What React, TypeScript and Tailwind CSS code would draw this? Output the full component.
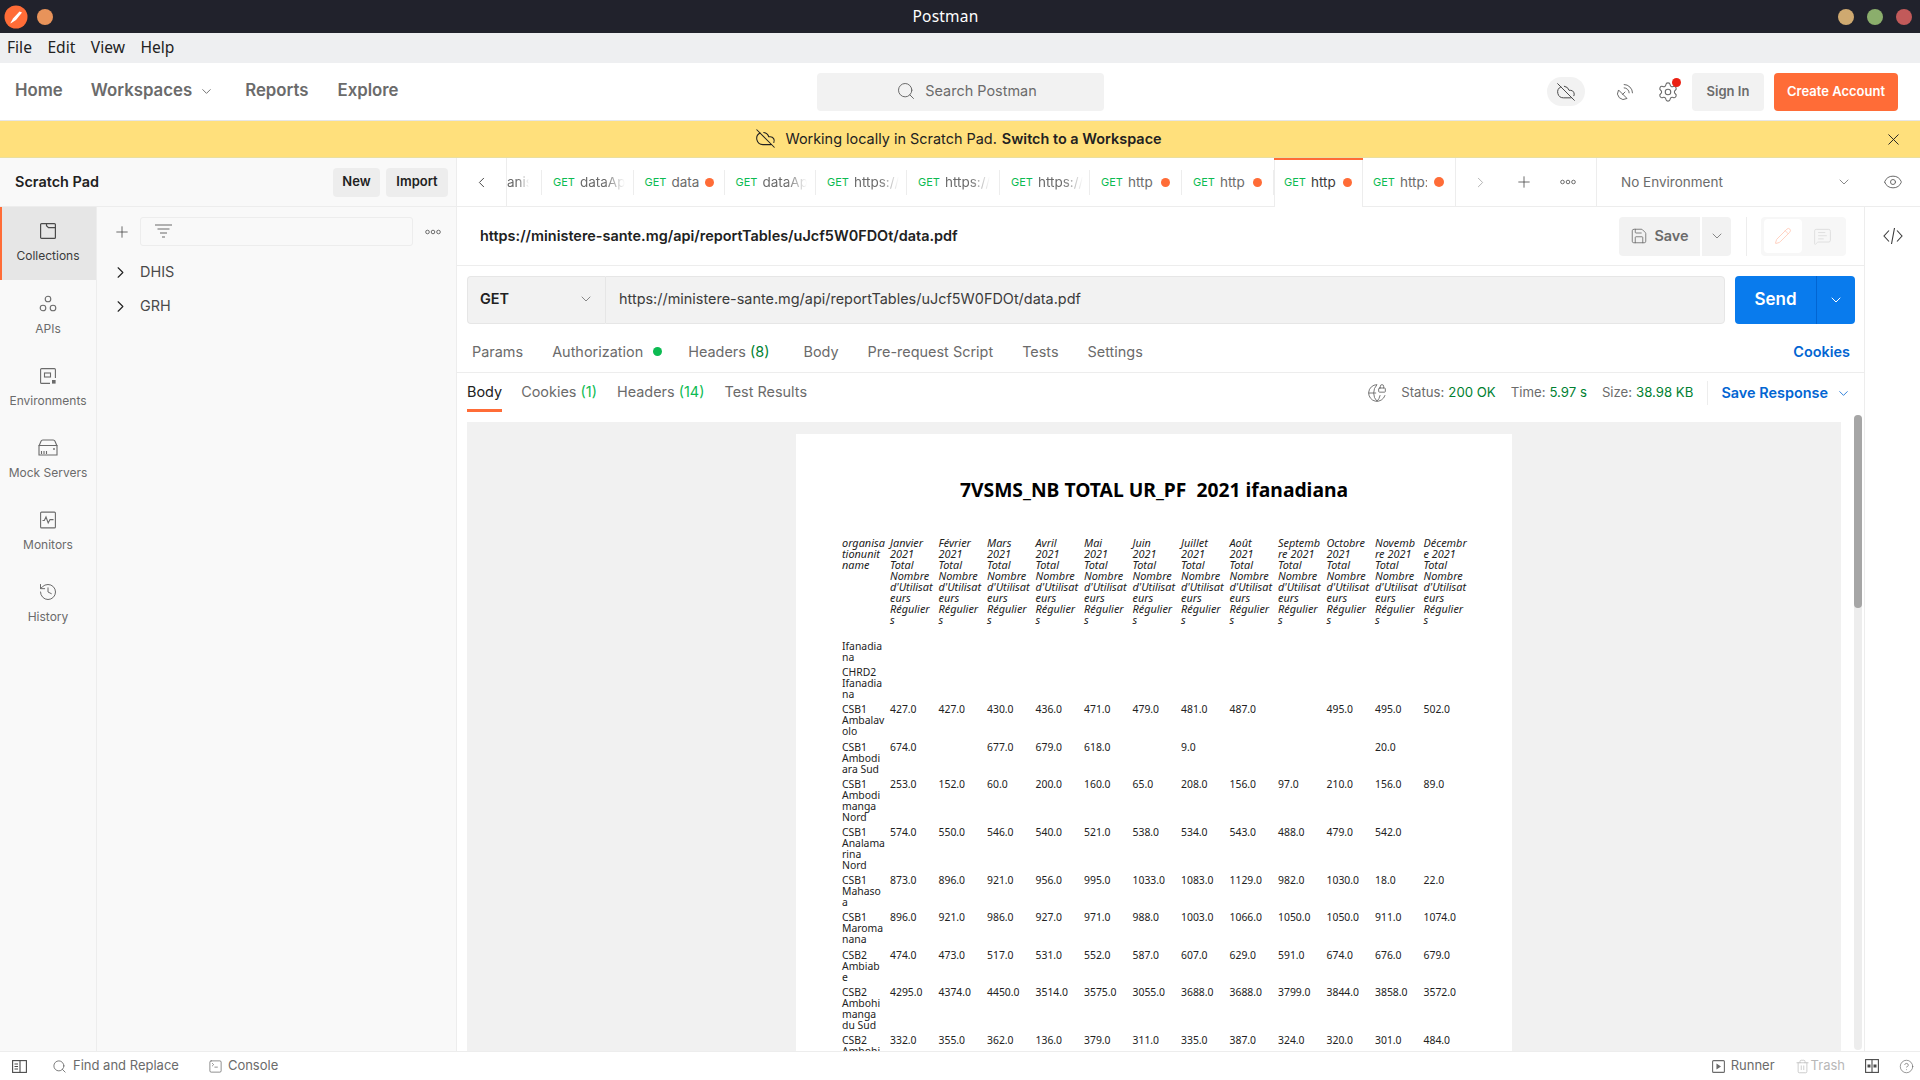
import {
  ChevronDown,
  ChevronLeft,
  ChevronRight,
  CircleHelp,
  CloudOff,
  Eye,
  GlobeLock,
  History,
  MessageSquareText,
  Pencil,
  Plus,
  SatelliteDish,
  Save,
  Search,
  Settings,
  SquareTerminal,
  Trash2,
  X,
} from "lucide-react";

const tabs = [
  { name: "dataAp", w: "w-[91.5px]" },
  { name: "data", dirty: true, w: "w-[91px]" },
  { name: "dataAp", w: "w-[91.5px]" },
  { name: "https://", w: "w-[91px]" },
  { name: "https://", w: "w-[93px]" },
  { name: "https://", w: "w-[90px]" },
  { name: "http", dirty: true, w: "w-[92px]" },
  { name: "http", dirty: true, w: "w-[92px]" },
];

const monthHeads = [
  "Janvier\n2021",
  "Février\n2021",
  "Mars\n2021",
  "Avril\n2021",
  "Mai\n2021",
  "Juin\n2021",
  "Juillet\n2021",
  "Août\n2021",
  "Septemb\nre 2021",
  "Octobre\n2021",
  "Novemb\nre 2021",
  "Décembr\ne 2021",
];

const rows: [string, string[]][] = [
  ["Ifanadia\nna", []],
  ["CHRD2\nIfanadia\nna", []],
  ["CSB1\nAmbalav\nolo", ["427.0", "427.0", "430.0", "436.0", "471.0", "479.0", "481.0", "487.0", "", "495.0", "495.0", "502.0"]],
  ["CSB1\nAmbodi\nara Sud", ["674.0", "", "677.0", "679.0", "618.0", "", "9.0", "", "", "", "20.0", ""]],
  ["CSB1\nAmbodi\nmanga\nNord", ["253.0", "152.0", "60.0", "200.0", "160.0", "65.0", "208.0", "156.0", "97.0", "210.0", "156.0", "89.0"]],
  ["CSB1\nAnalama\nrina\nNord", ["574.0", "550.0", "546.0", "540.0", "521.0", "538.0", "534.0", "543.0", "488.0", "479.0", "542.0", ""]],
  ["CSB1\nMahaso\na", ["873.0", "896.0", "921.0", "956.0", "995.0", "1033.0", "1083.0", "1129.0", "982.0", "1030.0", "18.0", "22.0"]],
  ["CSB1\nMaroma\nnana", ["896.0", "921.0", "986.0", "927.0", "971.0", "988.0", "1003.0", "1066.0", "1050.0", "1050.0", "911.0", "1074.0"]],
  ["CSB2\nAmbiab\ne", ["474.0", "473.0", "517.0", "531.0", "552.0", "587.0", "607.0", "629.0", "591.0", "674.0", "676.0", "679.0"]],
  ["CSB2\nAmbohi\nmanga\ndu Sud", ["4295.0", "4374.0", "4450.0", "3514.0", "3575.0", "3055.0", "3688.0", "3688.0", "3799.0", "3844.0", "3858.0", "3572.0"]],
  ["CSB2\nAmbohi\nmanga", ["332.0", "355.0", "362.0", "136.0", "379.0", "311.0", "335.0", "387.0", "324.0", "320.0", "301.0", "484.0"]],
];

function Rings() {
  return (
    <svg width="16" height="6" viewBox="0 0 16 6" fill="none" stroke="#6b6b6b" strokeWidth="1">
      <circle cx="2.5" cy="3" r="1.8" />
      <circle cx="8" cy="3" r="1.8" />
      <circle cx="13.5" cy="3" r="1.8" />
    </svg>
  );
}

function RailIcon({ kind }: { kind: string }) {
  if (kind === "Collections") {
    return (
      <svg width="18" height="18" viewBox="0 0 18 18" fill="none" stroke="#4a4a4a" strokeWidth="1.2">
        <rect x="1.6" y="1.6" width="14.8" height="14.8" rx="1" />
        <path d="M7.5 1.6v2.2l2 1.8h6.9" />
      </svg>
    );
  }
  if (kind === "APIs") {
    return (
      <svg width="18" height="18" viewBox="0 0 18 18" fill="none" stroke="#6b6b6b" strokeWidth="1.1">
        <circle cx="9" cy="4" r="2.8" />
        <circle cx="4" cy="13" r="2.8" />
        <circle cx="14" cy="13" r="2.8" />
      </svg>
    );
  }
  if (kind === "Environments") {
    return (
      <svg width="18" height="18" viewBox="0 0 18 18" fill="none" stroke="#6b6b6b" strokeWidth="1.1">
        <path d="M11 16.4H2.6a1 1 0 0 1-1-1V2.6a1 1 0 0 1 1-1h12.8a1 1 0 0 1 1 1V11" />
        <rect x="5.5" y="6" width="6" height="4" />
        <rect x="13" y="13" width="3.6" height="3.6" fill="#6b6b6b" stroke="none" />
      </svg>
    );
  }
  if (kind === "Mock Servers") {
    return (
      <svg width="20" height="17" viewBox="0 0 20 17" fill="none" stroke="#6b6b6b" strokeWidth="1.1">
        <path d="M1 7 3 2.2C3.3 1.5 4 1 4.8 1h10.4c.8 0 1.5.5 1.8 1.2L19 7" />
        <path d="M1 6.5h18V16H1z" />
        <path d="M3.5 15v-3M6 15v-3M8.5 15v-3" />
        <circle cx="16" cy="10" r="0.9" fill="#6b6b6b" stroke="none" />
      </svg>
    );
  }
  if (kind === "Monitors") {
    return (
      <svg width="18" height="18" viewBox="0 0 18 18" fill="none" stroke="#6b6b6b" strokeWidth="1.1">
        <rect x="1.6" y="1.1" width="14.8" height="15.8" rx="1" />
        <path d="M3.5 9.5h1.8l1.7-3.5 2.2 6 1.8-3.4h3.5" />
      </svg>
    );
  }
  return <History size={20} strokeWidth={1.2} color="#6b6b6b" />;
}

function RailItem({ label, active }: { label: string; active?: boolean }) {
  return (
    <div
      className={
        active
          ? "flex h-[73px] flex-col items-center border-l-2 border-[#ff6c37] bg-[#e6e6e6] pr-[2px] pt-[15px] text-[#3b3b3b]"
          : "flex h-[72.1px] flex-col items-center pt-[14.5px] text-[#6b6b6b]"
      }
    >
      <div className="flex h-[18px] items-center">
        <RailIcon kind={label} />
      </div>
      <span className="mt-[8px] text-[12px] leading-[15px]">{label}</span>
    </div>
  );
}

function Tab({ name, dirty, w }: { name: string; dirty?: boolean; w: string }) {
  return (
    <div className={`flex h-full shrink-0 items-center ${w}`}>
      <div className="flex h-[25px] w-full items-center overflow-hidden border-r border-[#ededed] pl-[11px]">
        <span className="text-[11px] text-[#0cbb52]">GET</span>
        {dirty ? (
          <>
            <span className="ml-[5px] whitespace-nowrap text-[13.5px] text-[#6b6b6b]">{name}</span>
            <span className={name === "data" ? "ml-[6px] size-[9px] shrink-0 rounded-full bg-[#ff6c37]" : "ml-[8px] size-[9px] shrink-0 rounded-full bg-[#ff6c37]"} />
          </>
        ) : (
          <span className="ml-[5px] w-[45px] overflow-hidden whitespace-nowrap text-[13.5px] text-[#6b6b6b] [mask-image:linear-gradient(to_right,black_55%,transparent)]">
            {name}
          </span>
        )}
      </div>
    </div>
  );
}

function Lines({ text }: { text: string }) {
  return <div className="whitespace-pre">{text}</div>;
}

function PdfPage() {
  return (
    <div className="mx-auto mt-[12px] h-[700px] w-[716px] bg-white pl-[46px] font-['Noto_Sans',sans-serif] text-[10.4px] leading-[11px] text-[#222222]">
      <h1 className="w-[670px] whitespace-pre pr-[46px] pt-[43px] text-center text-[19.3px] font-bold leading-[26px] text-black">
        {"7VSMS_NB TOTAL UR_PF  2021 ifanadiana"}
      </h1>
      <div className="mt-[34px] grid grid-cols-[48px_repeat(12,48.5px)] text-[10.9px] italic">
        <Lines text={"organisa\ntionunit\nname"} />
        {monthHeads.map((head) => (
          <Lines key={head} text={`${head}\nTotal\nNombre\nd'Utilisat\neurs\nRégulier\ns`} />
        ))}
      </div>
      <div className="mt-[16px] flex flex-col gap-[4.2px]">
        {rows.map(([name, values]) => (
          <div key={name} className="grid grid-cols-[48px_repeat(12,48.5px)]">
            <Lines text={name} />
            {values.map((value, i) => (
              <div key={i}>{value}</div>
            ))}
          </div>
        ))}
      </div>
    </div>
  );
}

export default function App() {
  return (
    <div className="flex h-[1080px] w-[1920px] flex-col overflow-hidden bg-white font-['Inter',sans-serif] text-[14.45px] text-[#3b3b3b]">
      {/* window chrome */}
      <div className="flex h-[33px] shrink-0 items-center bg-[#21222c] pl-[4px] pr-[8px]">
        <svg width="24" height="24" viewBox="0 0 24 24">
          <circle cx="12" cy="12" r="11.5" fill="#ff6c37" />
          <path d="M6.5 18 9 13.5l6.5-7 2.5 1-6 7.5-5.5 3.500z" fill="#ffffff" />
        </svg>
        <span className="ml-[9px] size-[16px] rounded-full bg-[#e8935a]" />
        <div className="flex-1 text-center font-['Noto_Sans',sans-serif] text-[15.5px] tracking-[0.2px] text-white">
          Postman
        </div>
        <div className="flex gap-[13px]">
          <span className="size-[16px] rounded-full bg-[#cfa970]" />
          <span className="size-[16px] rounded-full bg-[#8bae6c]" />
          <span className="size-[16px] rounded-full bg-[#c25a5a]" />
        </div>
      </div>

      <div className="flex h-[30px] shrink-0 items-center gap-[15.5px] bg-[#eeeff1] pl-[7px] font-['Noto_Sans',sans-serif] text-[15.6px] text-[#222222]">
        <span>File</span>
        <span>Edit</span>
        <span>View</span>
        <span>Help</span>
      </div>

      {/* top nav */}
      <div className="flex h-[58px] shrink-0 items-center border-b border-[#e6e6e6] pl-[15px] pr-[22px]">
        <div className="mb-[1px] flex w-[802px] items-center text-[16.8px] font-semibold text-[#6b6b6b]">
          <span>Home</span>
          <span className="ml-[28px]">Workspaces</span>
          <ChevronDown size={15} strokeWidth={1.5} className="ml-[7px] mt-[1px]" />
          <span className="ml-[31px]">Reports</span>
          <span className="ml-[29px]">Explore</span>
        </div>
        <div className="flex h-[38px] w-[287px] items-center justify-center gap-[9px] rounded-[4px] bg-[#f2f2f2] pb-[1px] pl-[12px] text-[#6b6b6b]">
          <Search size={20} strokeWidth={1.2} />
          <span>Search Postman</span>
        </div>
        <div className="ml-auto flex items-center">
          <div className="flex h-[29px] w-[38px] items-center justify-center rounded-full bg-[#f2f2f2]">
            <CloudOff size={20} strokeWidth={1.2} color="#4a4a4a" />
          </div>
          <SatelliteDish size={20} strokeWidth={1.2} color="#6b6b6b" className="ml-[30px]" />
          <div className="relative ml-[22px]">
            <Settings size={22} strokeWidth={1.2} color="#6b6b6b" />
            <span className="absolute -right-[2px] -top-[3px] size-[9px] rounded-full bg-[#eb2013]" />
          </div>
          <div className="ml-[13px] flex h-[38px] w-[72px] items-center justify-center rounded-[4px] bg-[#f2f2f2] text-[13px] font-semibold text-[#6b6b6b]">
            Sign In
          </div>
          <div className="ml-[10px] flex h-[38px] w-[124px] items-center justify-center rounded-[4px] bg-[#ff6c37] text-[13px] font-semibold text-white">
            Create Account
          </div>
        </div>
      </div>

      {/* scratch pad banner */}
      <div className="flex h-[37px] shrink-0 items-center border-b border-[#eadf9f] bg-[#ffe07c] text-[#212121]">
        <div className="flex flex-1 items-center justify-center pb-[1px] pl-[33px]">
          <CloudOff size={21} strokeWidth={1.2} />
          <span className="ml-[9px]">Working locally in Scratch Pad.</span>
          <span className="ml-[5px] font-semibold">Switch to a Workspace</span>
        </div>
        <X size={19} strokeWidth={1.2} className="mr-[17px]" />
      </div>

      <div className="flex min-h-0 flex-1">
        {/* sidebar */}
        <div className="flex w-[457px] shrink-0 flex-col border-r border-[#ededed] bg-[#f9f9f9]">
          <div className="flex h-[49px] shrink-0 items-center border-b border-[#ededed] pl-[15px] pr-[8px]">
            <span className="mb-[1px] font-semibold text-[#212121]">Scratch Pad</span>
            <div className="ml-auto flex h-[29px] w-[47px] items-center justify-center rounded-[4px] bg-[#ededed] text-[13px] font-semibold text-[#212121]">
              New
            </div>
            <div className="ml-[6px] flex h-[29px] w-[62px] items-center justify-center rounded-[4px] bg-[#ededed] text-[13px] font-semibold text-[#212121]">
              Import
            </div>
          </div>
          <div className="flex min-h-0 flex-1">
            <div className="w-[97px] shrink-0 border-r border-[#ededed]">
              <RailItem label="Collections" active />
              <RailItem label="APIs" />
              <RailItem label="Environments" />
              <RailItem label="Mock Servers" />
              <RailItem label="Monitors" />
              <RailItem label="History" />
            </div>
            <div className="flex-1">
              <div className="flex items-center pl-[16px] pt-[10px]">
                <Plus size={18} strokeWidth={1} color="#3b3b3b" />
                <div className="ml-[9px] flex h-[29px] w-[273px] items-center rounded-[3px] border border-[#ededed] pl-[14px]">
                  <svg width="17" height="15" viewBox="0 0 17 15" stroke="#6b6b6b" strokeWidth="1.2">
                    <path d="M0 1h17M2.500 5h12M5 9h7M7 13h3" />
                  </svg>
                </div>
                <div className="ml-[12px]">
                  <Rings />
                </div>
              </div>
              <div className="mt-[9px] flex h-[34px] items-center pl-[14px]">
                <ChevronRight size={19} strokeWidth={1.4} color="#212121" />
                <span className="ml-[10px] text-[#4a4a4a]">DHIS</span>
              </div>
              <div className="flex h-[34px] items-center pl-[14px]">
                <ChevronRight size={19} strokeWidth={1.4} color="#212121" />
                <span className="ml-[10px] text-[#4a4a4a]">GRH</span>
              </div>
            </div>
          </div>
        </div>

        {/* workbench */}
        <div className="flex min-w-0 flex-1 flex-col">
          <div className="flex h-[49px] shrink-0 items-center border-b border-[#ededed]">
            <div className="flex h-full w-[50px] shrink-0 items-center justify-center border-r border-[#ededed]">
              <ChevronLeft size={17} strokeWidth={1.3} />
            </div>
            <div className="flex h-full w-[35px] shrink-0 items-center">
              <div className="flex h-[25px] w-full items-center overflow-hidden whitespace-nowrap border-r border-[#ededed] text-[13.5px] text-[#6b6b6b]">
                <span className="[mask-image:linear-gradient(to_right,black_40%,transparent_85%)]">anis</span>
              </div>
            </div>
            {tabs.map((tab, i) => (
              <Tab key={i} {...tab} />
            ))}
            <div className="relative -mb-px flex h-[49px] w-[89px] shrink-0 items-center border-x border-[#ededed] bg-white pl-[9px]">
              <span className="absolute -left-px -right-px top-0 h-[2px] bg-[#ff6c37]" />
              <span className="text-[11px] text-[#0cbb52]">GET</span>
              <span className="ml-[5px] text-[13.5px] text-[#3b3b3b]">http</span>
              <span className="ml-[7px] size-[9px] rounded-full bg-[#ff6c37]" />
            </div>
            <div className="flex h-full w-[93px] shrink-0 items-center border-r border-[#ededed] pl-[10px]">
              <span className="text-[11px] text-[#0cbb52]">GET</span>
              <span className="ml-[5px] w-[27px] overflow-hidden text-[13.5px] text-[#6b6b6b]">http:</span>
              <span className="ml-[7px] size-[10px] rounded-full bg-[#ff6c37]" />
            </div>
            <div className="flex h-full w-[141px] shrink-0 items-center border-r border-[#ededed] pl-[16px] text-[#6b6b6b]">
              <ChevronRight size={17} strokeWidth={1.2} color="#a6a6a6" />
              <Plus size={18} strokeWidth={1} color="#3b3b3b" className="ml-[26px]" />
              <div className="ml-[27px]">
                <Rings />
              </div>
            </div>
            <div className="flex flex-1 items-center pl-[24px] text-[13.5px] text-[#6b6b6b]">
              <span>No Environment</span>
              <ChevronDown size={16} strokeWidth={1.2} className="ml-[113px]" />
              <Eye size={20} strokeWidth={1.2} className="ml-[31px]" />
            </div>
          </div>

          <div className="flex min-h-0 flex-1">
            <div className="flex min-w-0 flex-1 flex-col">
              <div className="flex h-[59px] shrink-0 items-center border-b border-[#ededed] pl-[23px] pr-[18px]">
                <span className="mb-[1px] font-semibold text-[#212121]">
                  https://ministere-sante.mg/api/reportTables/uJcf5W0FDOt/data.pdf
                </span>
                <div className="ml-auto flex h-[39px] w-[81px] items-center justify-center gap-[6px] rounded-l-[4px] bg-[#f2f2f2] font-semibold text-[#6b6b6b]">
                  <Save size={18} strokeWidth={1.1} />
                  <span>Save</span>
                </div>
                <div className="ml-[2px] flex h-[39px] w-[29px] items-center justify-center rounded-r-[4px] bg-[#f2f2f2] text-[#6b6b6b]">
                  <ChevronDown size={16} strokeWidth={1.2} />
                </div>
                <div className="ml-[15px] h-[39px] border-l border-[#ededed]" />
                <div className="ml-[14px] flex h-[39px] w-[85px] items-center rounded-[4px] bg-[#f7f7f7] pl-[3px]">
                  <div className="flex h-[34px] w-[38px] items-center justify-center rounded-[4px] bg-white">
                    <Pencil size={18} strokeWidth={1.1} color="#ffc8b5" />
                  </div>
                  <MessageSquareText size={19} strokeWidth={1.1} color="#dcdcdc" className="ml-[11px]" />
                </div>
              </div>

              <div className="flex shrink-0 pl-[10px] pr-[9px] pt-[10px]">
                <div className="flex h-[48px] w-[138px] items-center rounded-l-[4px] border border-r-0 border-[#e6e6e6] bg-[#f2f2f2] pb-[2px] pl-[12px] pr-[11px] font-semibold text-[#212121]">
                  <span>GET</span>
                  <ChevronDown size={16} strokeWidth={1.2} color="#6b6b6b" className="ml-auto" />
                </div>
                <div className="flex h-[48px] flex-1 items-center rounded-r-[4px] border border-[#e6e6e6] bg-[#f2f2f2] pb-[2px] pl-[13px] text-[#3b3b3b]">
                  https://ministere-sante.mg/api/reportTables/uJcf5W0FDOt/data.pdf
                </div>
                <div className="ml-[10px] flex h-[48px] w-[81px] items-center justify-center rounded-l-[4px] bg-[#097bed] pb-[1px] text-[17px] font-semibold text-white">
                  Send
                </div>
                <div className="flex h-[48px] w-[39px] items-center justify-center rounded-r-[4px] border-l border-[#0265d2] bg-[#097bed] text-white">
                  <ChevronDown size={16} strokeWidth={1.5} />
                </div>
              </div>

              <div className="flex h-[49px] shrink-0 items-center border-b border-[#ededed] pl-[15px] pr-[14px] pt-[7px] text-[#6b6b6b]">
                <span>Params</span>
                <span className="ml-[29px]">Authorization</span>
                <span className="ml-[10px] size-[9px] rounded-full bg-[#0cbb52]" />
                <span className="ml-[26px]">
                  Headers <span className="text-[#007f31]">(8)</span>
                </span>
                <span className="ml-[34px]">Body</span>
                <span className="ml-[29px]">Pre-request Script</span>
                <span className="ml-[29px]">Tests</span>
                <span className="ml-[29px]">Settings</span>
                <span className="ml-auto font-semibold text-[#0265d2]">Cookies</span>
              </div>

              <div className="flex h-[49px] shrink-0 items-start pl-[10px] pr-[13px] pt-[8px] text-[#6b6b6b]">
                <span className="h-[31px] border-b-[3px] border-[#ff6c37] text-[#212121]">Body</span>
                <span className="ml-[19px]">
                  Cookies <span className="text-[#0cbb52]">(1)</span>
                </span>
                <span className="ml-[20px]">
                  Headers <span className="text-[#0cbb52]">(14)</span>
                </span>
                <span className="ml-[20px]">Test Results</span>
                <div className="ml-auto flex items-center text-[13.2px]">
                  <GlobeLock size={20} strokeWidth={1.1} />
                  <span className="ml-[14px]">Status:</span>
                  <span className="ml-[4px] text-[#007f31]">200 OK</span>
                  <span className="ml-[15px]">Time:</span>
                  <span className="ml-[4px] text-[#007f31]">5.97 s</span>
                  <span className="ml-[15px]">Size:</span>
                  <span className="ml-[4px] text-[#007f31]">38.98 KB</span>
                  <span className="ml-[14px] h-[24px] border-l border-[#ededed]" />
                  <span className="ml-[13px] text-[14.45px] font-semibold text-[#0265d2]">Save Response</span>
                  <ChevronDown size={15} strokeWidth={1.3} color="#0265d2" className="ml-[8px]" />
                </div>
              </div>

              <div className="flex min-h-0 flex-1 pl-[10px] pr-[2px]">
                <div className="min-w-0 flex-1 overflow-hidden bg-[#f1f1f1]">
                  <PdfPage />
                </div>
                <div className="-mt-[7px] ml-[13px] h-[calc(100%+6px)] w-[8px] rounded-full bg-[#ededed]">
                  <div className="h-[193px] rounded-full bg-[#a6a6a6]" />
                </div>
              </div>
            </div>

            <div className="flex w-[56px] shrink-0 justify-center border-l border-[#ededed] pt-[19px]">
              <svg width="20" height="20" viewBox="0 0 20 20" fill="none" stroke="#3b3b3b" strokeWidth="1.1">
                <path d="M6 4.500 1 10l5 5.500M14 4.500l5 5.500-5 5.500M11.500 2l-3 16" />
              </svg>
            </div>
          </div>
        </div>
      </div>

      {/* status bar */}
      <div className="flex h-[29px] shrink-0 items-center border-t border-[#ededed] pl-[12px] pr-[6px] text-[13px] text-[#6b6b6b]">
        <svg width="15" height="13" viewBox="0 0 15 13" fill="none" stroke="#4a4a4a" strokeWidth="1.1">
          <rect x="0.600" y="0.600" width="13.800" height="11.800" />
          <path d="M8 0.600v11.800M2.500 4h3.500M2.500 6.500h3.500M2.500 9h3.500" />
        </svg>
        <Search size={15} strokeWidth={1.4} className="ml-[25px]" />
        <span className="ml-[6px]">Find and Replace</span>
        <SquareTerminal size={15} strokeWidth={1.2} className="ml-[29px]" />
        <span className="ml-[5px]">Console</span>
        <div className="ml-auto flex items-center">
          <svg width="13" height="13" viewBox="0 0 13 13" fill="none" stroke="#6b6b6b" strokeWidth="1.1">
            <rect x="0.600" y="0.600" width="11.800" height="11.800" rx="1" />
            <path d="M5 4.500v4l3-2z" fill="#6b6b6b" />
          </svg>
          <span className="ml-[6px]">Runner</span>
          <Trash2 size={15} strokeWidth={1.1} color="#b8b8b8" className="ml-[20px]" />
          <span className="ml-[1px] text-[#b8b8b8]">Trash</span>
          <svg width="14" height="14" viewBox="0 0 14 14" className="ml-[20px]" fill="none" stroke="#4a4a4a" strokeWidth="1.1">
            <rect x="0.600" y="0.600" width="12.800" height="12.800" />
            <path d="M7 0.600v12.800" />
            <rect x="2.500" y="5.500" width="3" height="3" fill="#4a4a4a" stroke="none" />
            <rect x="8.500" y="5.500" width="3" height="3" fill="#4a4a4a" stroke="none" />
          </svg>
          <CircleHelp size={15} strokeWidth={1.1} className="ml-[20px]" />
        </div>
      </div>
    </div>
  );
}
